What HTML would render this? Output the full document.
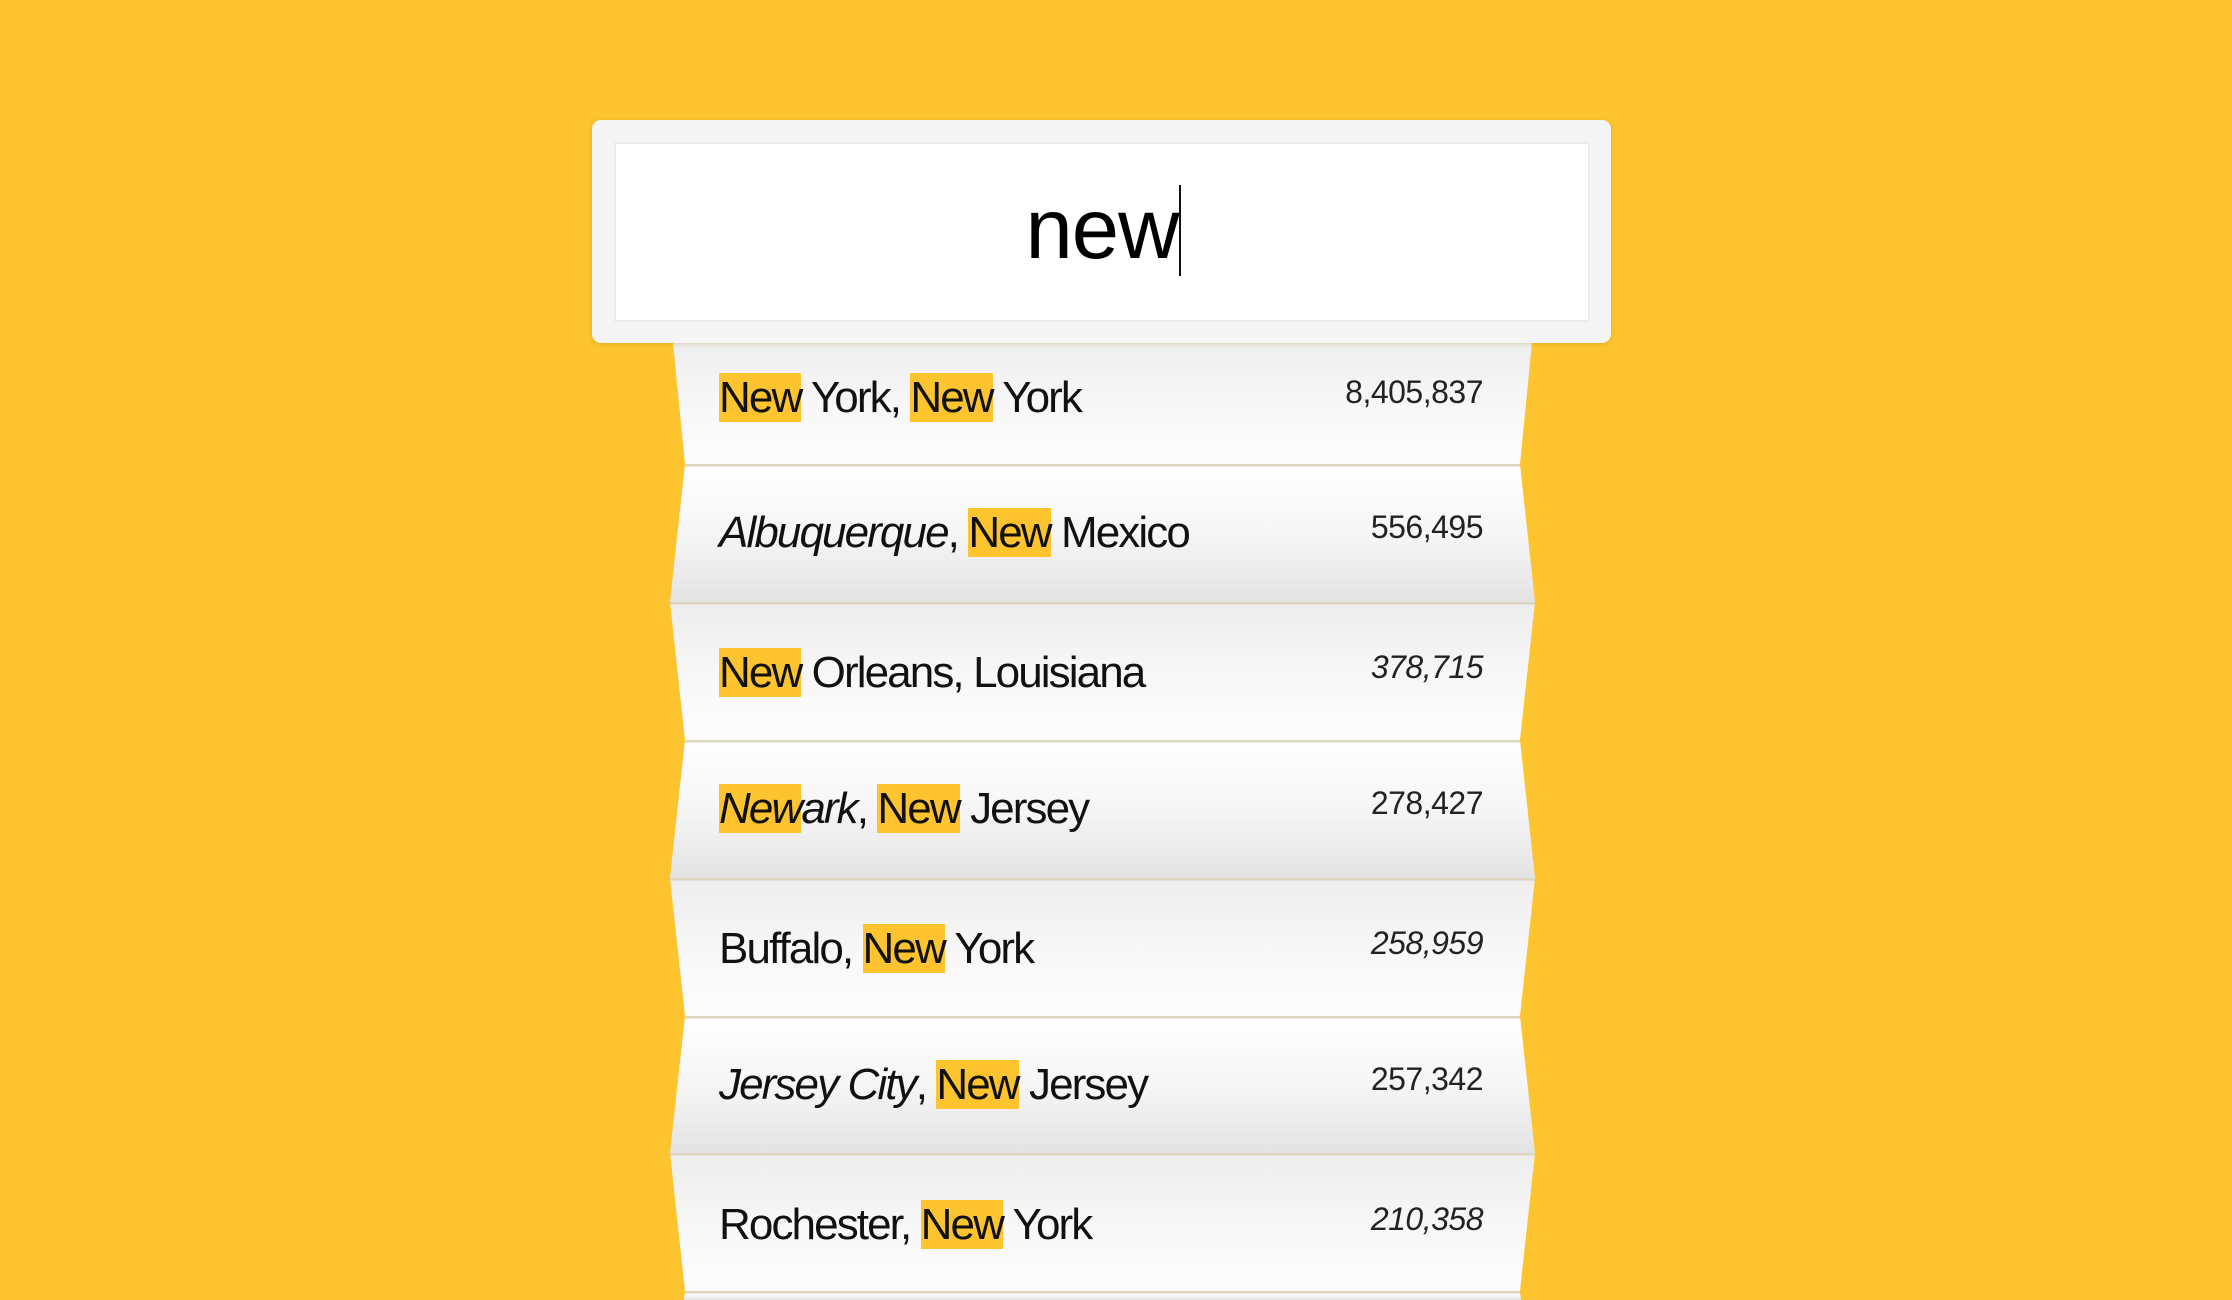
<!DOCTYPE html>
<html><head><meta charset="utf-8"><style>
html,body{margin:0;padding:0;width:2232px;height:1300px;overflow:hidden}
body{background:#fdc42f;position:relative;font-family:"Helvetica Neue","Liberation Sans",Arial,sans-serif}
.box{position:absolute;left:592px;top:120px;width:1019px;height:223px;background:#f5f5f5;border-radius:9px;box-shadow:0 1px 4px rgba(160,110,0,.25);z-index:5}
.inner{position:absolute;left:22px;top:22px;width:972px;height:176px;background:#fff;border:2px solid #ececec}
.q{position:absolute;left:0;width:100%;top:36px;text-align:center;font-size:85px;line-height:100px;color:#000;letter-spacing:-1px}
.cur{position:absolute;left:1179px;top:185px;width:2px;height:91px;background:#111;z-index:6}
.row{position:absolute;left:0;width:2232px}
.odd{background:linear-gradient(#dcd5c0 0,#dcd5c0 2px,#ededed 3px,#f7f7f7 50%,#fdfdfd 100%)}
.even{background:linear-gradient(#dcd5c0 0,#dcd5c0 2px,#fefefe 3px,#f6f6f6 50%,#e3e3e3 100%)}
.t{position:absolute;left:719px;font-size:44px;line-height:50px;letter-spacing:-1.9px;color:#111;white-space:nowrap;z-index:3}
.t b{font-weight:normal;background:#fdc42f}
.n{position:absolute;right:749px;font-size:32px;line-height:40px;letter-spacing:-0.5px;color:#222;white-space:nowrap;z-index:3}
i{font-style:italic}
</style></head><body>
<div class="box"><div class="inner"><div class="q">new</div></div></div>
<div class="cur"></div>

<div class="row odd" style="top:343px;height:121px;clip-path:polygon(673px 0,1532px 0,1520px 100%,685px 100%);background:linear-gradient(#eeeeee 0,#f7f7f7 50%,#fdfdfd 100%)"></div>
<div class="row even" style="top:464px;height:138px;clip-path:polygon(685px 0,1520px 0,1535px 100%,670px 100%)"></div>
<div class="row odd" style="top:602px;height:138px;clip-path:polygon(670px 0,1535px 0,1520px 100%,685px 100%)"></div>
<div class="row even" style="top:740px;height:138px;clip-path:polygon(685px 0,1520px 0,1535px 100%,670px 100%)"></div>
<div class="row odd" style="top:878px;height:138px;clip-path:polygon(670px 0,1535px 0,1520px 100%,685px 100%)"></div>
<div class="row even" style="top:1016px;height:137px;clip-path:polygon(685px 0,1520px 0,1535px 100%,670px 100%)"></div>
<div class="row odd" style="top:1153px;height:138px;clip-path:polygon(670px 0,1535px 0,1520px 100%,685px 100%)"></div>
<div class="row even" style="top:1291px;height:9px;clip-path:polygon(685px 0,1520px 0,1521px 100%,684px 100%)"></div>

<div class="t" style="top:373px"><b>New</b> York, <b>New</b> York</div>
<div class="n" style="top:372px">8,405,837</div>
<div class="t" style="top:508px"><i>Albuquerque</i>, <b>New</b> Mexico</div>
<div class="n" style="top:507px">556,495</div>
<div class="t" style="top:648px"><b>New</b> Orleans, Louisiana</div>
<div class="n" style="top:647px"><i>378,715</i></div>
<div class="t" style="top:784px"><i><b>New</b>ark</i>, <b>New</b> Jersey</div>
<div class="n" style="top:783px">278,427</div>
<div class="t" style="top:924px">Buffalo, <b>New</b> York</div>
<div class="n" style="top:923px"><i>258,959</i></div>
<div class="t" style="top:1060px"><i>Jersey City</i>, <b>New</b> Jersey</div>
<div class="n" style="top:1059px">257,342</div>
<div class="t" style="top:1200px">Rochester, <b>New</b> York</div>
<div class="n" style="top:1199px"><i>210,358</i></div>
</body></html>
